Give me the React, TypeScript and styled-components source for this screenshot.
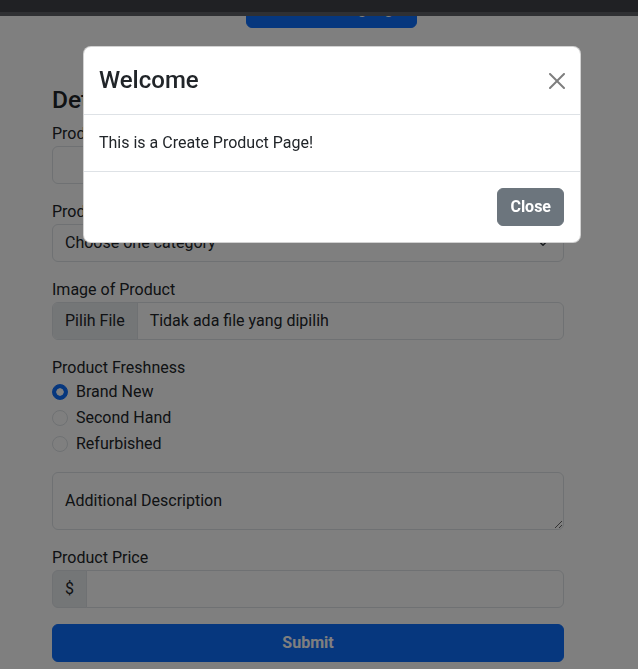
import React from "react";
import styled, { createGlobalStyle } from "styled-components";

const GlobalStyle = createGlobalStyle`
  html, body { margin: 0; padding: 0; }
  body {
    font-family: Roboto, "Liberation Sans", sans-serif;
    font-size: 16px;
    line-height: 1.5;
    color: #212529;
    background: #fff;
    overflow: hidden;
  }
  *, *::before, *::after { box-sizing: border-box; }
`;

const TopBar = styled.div`
  height: 16px;
  background: #404248;
  border-bottom: 4px solid #5e6066;
`;

const HeaderStrip = styled.div`
  height: 12px;
  overflow: hidden;
  padding-left: 246px;
`;

const LangButton = styled.button`
  display: block;
  margin-top: -26px;
  width: 171px;
  height: 38px;
  padding: 6px 12px 6px 24px;
  background: #0d6efd;
  border: 1px solid #0d6efd;
  border-radius: 6px;
  color: #fff;
  font: 400 16px/1.5 Roboto, "Liberation Sans", sans-serif;
`;

const Main = styled.main`
  padding: 57px 0 0 52px;
`;

const Form = styled.form`
  width: 512px;
`;

const Heading = styled.h3`
  margin: 0 0 8px;
  font-size: 24.5px;
  font-weight: 500;
  line-height: 1.2;
`;

const Group = styled.div<{ $mb?: number }>`
  margin-bottom: ${(p) => (p.$mb ?? 16)}px;
`;

const Label = styled.label`
  display: block;
  font-size: 16px;
  line-height: 24px;
`;

const Input = styled.input`
  display: block;
  width: 100%;
  height: 38px;
  padding: 6px 12px;
  font: 400 16px/1.5 Roboto, "Liberation Sans", sans-serif;
  color: #212529;
  background: #fff;
  border: 1px solid #dee2e6;
  border-radius: 6px;
  outline: none;
`;

const SelectBox = styled.div`
  display: flex;
  align-items: center;
  justify-content: space-between;
  height: 38px;
  padding: 6px 12px;
  border: 1px solid #dee2e6;
  border-radius: 6px;
  background: #fff;
`;

const FileBox = styled.div`
  display: flex;
  align-items: stretch;
  height: 38px;
  border: 1px solid #dee2e6;
  border-radius: 6px;
  background: #fff;
  overflow: hidden;
`;

const FileButton = styled.span`
  display: flex;
  align-items: center;
  padding: 0 12px;
  background: #e9ecef;
  border-right: 1px solid #dee2e6;
`;

const FileText = styled.span`
  display: flex;
  align-items: center;
  padding-left: 12px;
`;

const CheckRow = styled.div`
  display: flex;
  align-items: flex-start;
  gap: 8px;
  min-height: 24px;
  margin-bottom: 2px;
`;

const Radio = styled.span<{ $checked?: boolean }>`
  flex: none;
  width: 16px;
  height: 16px;
  margin-top: 4px;
  border-radius: 50%;
  border: 1px solid ${(p) => (p.$checked ? "#0d6efd" : "#dee2e6")};
  background: ${(p) =>
    p.$checked
      ? "radial-gradient(circle, #fff 0 3.4px, #0d6efd 4px)"
      : "#fff"};
`;

const TextArea = styled.textarea`
  display: block;
  width: 100%;
  height: 58px;
  padding: 16px 12px;
  font: 400 16px/1.5 Roboto, "Liberation Sans", sans-serif;
  color: #212529;
  border: 1px solid #dee2e6;
  border-radius: 6px;
  resize: vertical;
  outline: none;
  &::placeholder {
    color: #212529;
    opacity: 1;
  }
`;

const InputGroup = styled.div`
  display: flex;
  height: 38px;
`;

const Addon = styled.span`
  display: flex;
  align-items: center;
  padding: 0 12px;
  background: #e9ecef;
  border: 1px solid #dee2e6;
  border-radius: 6px 0 0 6px;
`;

const GroupInput = styled(Input)`
  flex: 1;
  margin-left: -1px;
  border-radius: 0 6px 6px 0;
`;

const SubmitButton = styled.button`
  display: block;
  width: 100%;
  height: 38px;
  padding: 6px 12px;
  background: #0d6efd;
  border: 1px solid #0d6efd;
  border-radius: 6px;
  color: #fff;
  font: 700 16px/1.5 Roboto, "Liberation Sans", sans-serif;
`;

const Backdrop = styled.div`
  position: fixed;
  inset: 0;
  background: rgba(0, 0, 0, 0.5);
  padding: 46px 0 0 83px;
`;

const Dialog = styled.div`
  width: 498px;
  background: #fff;
  border: 1px solid rgba(0, 0, 0, 0.175);
  border-radius: 8px;
`;

const ModalHeader = styled.div`
  display: flex;
  align-items: center;
  justify-content: space-between;
  padding: 16px 16px 16px 15px;
  border-bottom: 1px solid #dee2e6;
`;

const ModalTitle = styled.h4`
  margin: 0;
  font-size: 24px;
  font-weight: 500;
  line-height: 35px;
`;

const CloseX = styled.button`
  display: flex;
  padding: 0;
  border: 0;
  background: transparent;
  opacity: 0.5;
  margin-right: -1px;
`;

const ModalBody = styled.div`
  padding: 16px 16px 16px 15px;
`;

const ModalFooter = styled.div`
  display: flex;
  justify-content: flex-end;
  padding: 12px;
  border-top: 1px solid #dee2e6;
`;

const SecondaryButton = styled.button`
  margin: 4px;
  height: 38px;
  padding: 6px 12px;
  background: #6c757d;
  border: 1px solid #6c757d;
  border-radius: 6px;
  color: #fff;
  font: 700 16px/1.5 Roboto, "Liberation Sans", sans-serif;
`;

const Chevron = () => (
  <svg width="16" height="12" viewBox="0 0 16 16" fill="none">
    <path
      d="m2 5 6 6 6-6"
      stroke="#343a40"
      strokeWidth="2"
      strokeLinecap="round"
      strokeLinejoin="round"
    />
  </svg>
);

const XIcon = () => (
  <svg width="16" height="16" viewBox="0 0 16 16" fill="#000">
    <path d="M.293.293a1 1 0 0 1 1.414 0L8 6.586 14.293.293a1 1 0 1 1 1.414 1.414L9.414 8l6.293 6.293a1 1 0 0 1-1.414 1.414L8 9.414l-6.293 6.293a1 1 0 0 1-1.414-1.414L6.586 8 .293 1.707a1 1 0 0 1 0-1.414" />
  </svg>
);

const freshness = [
  { label: "Brand New", checked: true },
  { label: "Second Hand", checked: false },
  { label: "Refurbished", checked: false },
];

export default function App() {
  return (
    <>
      <GlobalStyle />
      <TopBar />
      <HeaderStrip>
        <LangButton type="button">Choose Language</LangButton>
      </HeaderStrip>
      <Main>
        <Form onSubmit={(e) => e.preventDefault()}>
          <Heading>Detail Product</Heading>
          <Group>
            <Label>Product Name</Label>
            <Input type="text" />
          </Group>
          <Group>
            <Label>Product Category</Label>
            <SelectBox>
              <span>Choose one category</span>
              <Chevron />
            </SelectBox>
          </Group>
          <Group>
            <Label>Image of Product</Label>
            <FileBox>
              <FileButton>Pilih File</FileButton>
              <FileText>Tidak ada file yang dipilih</FileText>
            </FileBox>
          </Group>
          <Group>
            <Label>Product Freshness</Label>
            {freshness.map((f) => (
              <CheckRow key={f.label}>
                <Radio $checked={f.checked} />
                <span>{f.label}</span>
              </CheckRow>
            ))}
          </Group>
          <Group>
            <TextArea placeholder="Additional Description" />
          </Group>
          <Group>
            <Label>Product Price</Label>
            <InputGroup>
              <Addon>$</Addon>
              <GroupInput type="text" />
            </InputGroup>
          </Group>
          <SubmitButton type="submit">Submit</SubmitButton>
        </Form>
      </Main>
      <Backdrop>
        <Dialog>
          <ModalHeader>
            <ModalTitle>Welcome</ModalTitle>
            <CloseX type="button" aria-label="Close">
              <XIcon />
            </CloseX>
          </ModalHeader>
          <ModalBody>This is a Create Product Page!</ModalBody>
          <ModalFooter>
            <SecondaryButton type="button">Close</SecondaryButton>
          </ModalFooter>
        </Dialog>
      </Backdrop>
    </>
  );
}
